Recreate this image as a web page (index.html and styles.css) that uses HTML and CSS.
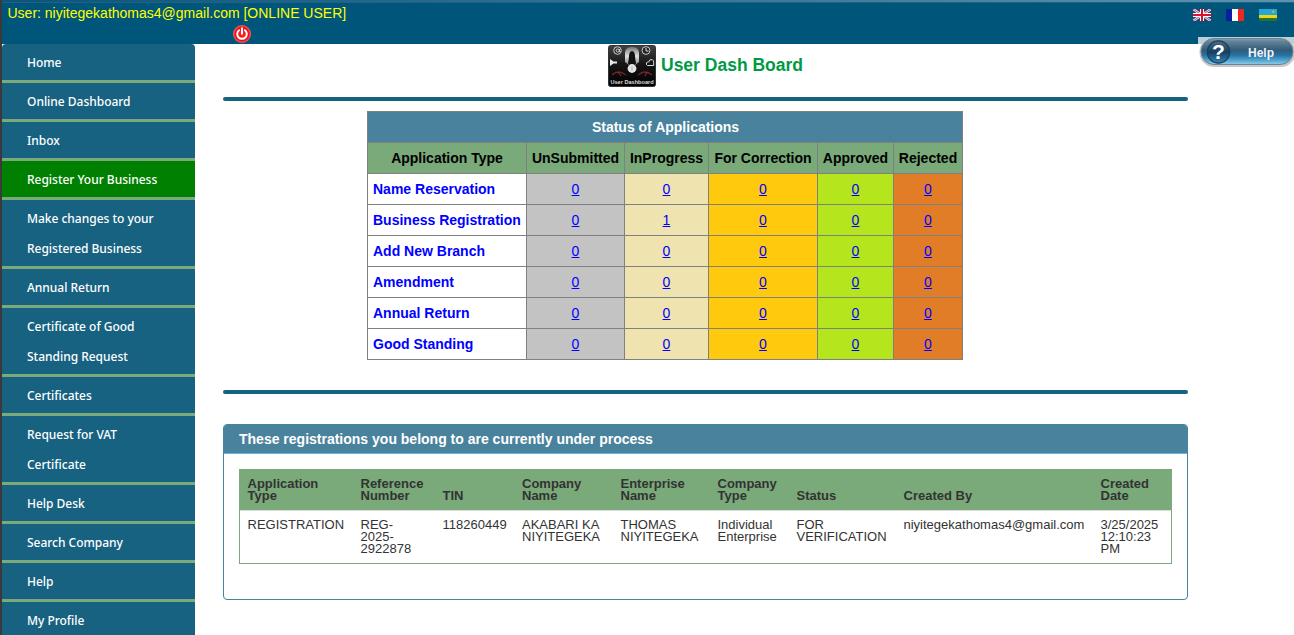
FILE: index.html
```html
<!DOCTYPE html>
<html lang="en">
<head>
<meta charset="utf-8">
<title>User Dash Board</title>
<link rel="stylesheet" href="styles.css">
</head>
<body>
<div class="page">
  <header class="topbar">
    <div class="account">
      <div class="user">User: niyitegekathomas4@gmail.com [ONLINE USER]</div>
      <svg class="power" width="18" height="18" viewBox="0 0 18 18"><defs><radialGradient id="pw"><stop offset="0" stop-color="#f22"/><stop offset=".75" stop-color="#e8161b"/><stop offset="1" stop-color="#f66"/></radialGradient></defs><circle cx="9" cy="9" r="9" fill="url(#pw)"/><path d="M6.1 5.2A4.8 4.8 0 1 0 11.900 5.200" fill="none" stroke="#fff" stroke-width="1.900" stroke-linecap="round"/><path d="M9 3.300V8.800" stroke="#fff" stroke-width="2" stroke-linecap="round"/></svg>
    </div>
    <div class="flags">
      <svg width="18" height="12" viewBox="0 0 18 12"><path fill="#28407e" d="M0 0h18v12H0z"/><path d="M0 0l18 12M18 0L0 12" stroke="#f3e9ee" stroke-width="2.400"/><path d="M0 0l18 12M18 0L0 12" stroke="#d44a5b" stroke-width="1"/><path d="M9 0v12M0 6h18" stroke="#fff" stroke-width="4"/><path d="M9 0v12M0 6h18" stroke="#d8142c" stroke-width="2"/></svg>
      <svg width="18" height="12" viewBox="0 0 18 12"><path fill="#0b1f9e" d="M0 0h6v12H0z"/><path fill="#fff" d="M6 0h6v12H6z"/><path fill="#f0271c" d="M12 0h6v12h-6z"/></svg>
      <svg width="18" height="12" viewBox="0 0 18 12"><path fill="#23a6dc" d="M0 0h18v6H0z"/><path fill="#f4d40c" d="M0 6h18v3H0z"/><path fill="#257236" d="M0 9h18v3H0z"/><circle cx="14.300" cy="2.800" r="1.300" fill="#c4b84a"/></svg>
    </div>
    <a class="help-button">
      <svg width="96" height="31" viewBox="0 0 96 31">
        <defs>
          <linearGradient id="hb" x2="0" y2="1"><stop offset="0" stop-color="#8ba3b1"/><stop offset=".1" stop-color="#64859a"/><stop offset=".45" stop-color="#305b78"/><stop offset=".65" stop-color="#2673a4"/><stop offset=".9" stop-color="#63b5dd"/><stop offset="1" stop-color="#9ecce0"/></linearGradient>
          <linearGradient id="hc" x2="0" y2="1"><stop offset="0" stop-color="#4a6f87"/><stop offset=".5" stop-color="#153e61"/><stop offset="1" stop-color="#3488b8"/></linearGradient>
        </defs>
        <path fill="#b9cfd9" d="M0 0h96v7H0z"/><path fill="#fff" d="M0 7h96v24H0z"/>
        <rect x="1.500" y=".5" width="96" height="29.500" rx="14.500" fill="#c2c9cc"/>
        <rect x="3" y="1.500" width="92" height="26" rx="13" fill="url(#hb)" stroke="#6f828d"/>
        <circle cx="20.500" cy="15" r="11.200" fill="url(#hc)" stroke="#173f5c" stroke-width="1.200"/>
      </svg>
      <span class="help-mark">?</span><span class="help-label">Help</span>
    </a>
  </header>

  <div class="body">
    <nav class="menu">
      <a>Home</a>
      <a>Online Dashboard</a>
      <a>Inbox</a>
      <a class="active">Register Your Business</a>
      <a>Make changes to your<br>Registered Business</a>
      <a>Annual Return</a>
      <a>Certificate of Good<br>Standing Request</a>
      <a>Certificates</a>
      <a>Request for VAT<br>Certificate</a>
      <a>Help Desk</a>
      <a>Search Company</a>
      <a>Help</a>
      <a>My Profile</a>
    </nav>

    <main class="content">
      <div class="heading">
        <div class="dash-icon">
          <svg width="48" height="42" viewBox="0 0 48 42">
            <defs><linearGradient id="dk" x2="0" y2="1"><stop offset="0" stop-color="#434343"/><stop offset=".45" stop-color="#161616"/><stop offset="1" stop-color="#000"/></linearGradient><linearGradient id="arch" x2="0" y2="1"><stop offset="0" stop-color="#777"/><stop offset=".5" stop-color="#ddd"/><stop offset="1" stop-color="#888"/></linearGradient></defs>
            <rect x=".5" y=".5" width="47" height="41" rx="2" fill="url(#dk)" stroke="#333"/>
            <path d="M17 17V7Q18 2 24 2T31 7V17L27 20V10Q24 7 21 10V20Z" fill="url(#arch)"/>
            <path d="M21.500 8Q24 4 26.500 8L28 19H20Z" fill="#111"/>
            <circle cx="24" cy="23.500" r="4.400" fill="#e4e4e4"/><path d="M24 21.500v4" stroke="#aaa"/>
            <path d="M13.400 6.500Q12.500 9.300 9.500 9.300A3.800 3.800 0 1 1 13.300 5.500Q13 7.500 11.500 6.800V4" fill="none" stroke="#ccc"/><circle cx="9.700" cy="5.500" r="1.500" fill="none" stroke="#ccc"/>
            <circle cx="38" cy="5.500" r="3.900" fill="#222" stroke="#ccc"/><path d="M38 3v3h2.500" fill="none" stroke="#ddd"/>
            <path d="M2 14l3.500 2.500H9v2H5.500L2 21z" fill="#e8e8e8"/>
            <path d="M39.500 20.500q-1.500-.5-1-2.500.8-1.500 2.200-1.100.8-3.200 3.600-2.200 1.600.8 1.400 3v2.800z" fill="none" stroke="#ddd"/>
            <path d="M4 30q6-6 14 0M30 30q7-6 14 0" fill="none" stroke="#6c2523" stroke-width="1.300"/><path d="M10 27l3 4M39 27l-2 4" stroke="#b23" stroke-width="1"/>
          </svg>
          <span>User Dashboard</span>
        </div>
        <h1>User Dash Board</h1>
      </div>
      <div class="rule"></div>

      <table class="status">
        <colgroup><col class="c1"><col class="c2"><col class="c3"><col class="c4"><col class="c5"><col class="c6"></colgroup>
        <tr class="caption"><th colspan="6">Status of Applications</th></tr>
        <tr class="labels"><th>Application Type</th><th>UnSubmitted</th><th>InProgress</th><th>For Correction</th><th>Approved</th><th>Rejected</th></tr>
        <tr><th>Name Reservation</th><td><a>0</a></td><td><a>0</a></td><td><a>0</a></td><td><a>0</a></td><td><a>0</a></td></tr>
        <tr><th>Business Registration</th><td><a>0</a></td><td><a>1</a></td><td><a>0</a></td><td><a>0</a></td><td><a>0</a></td></tr>
        <tr><th>Add New Branch</th><td><a>0</a></td><td><a>0</a></td><td><a>0</a></td><td><a>0</a></td><td><a>0</a></td></tr>
        <tr><th>Amendment</th><td><a>0</a></td><td><a>0</a></td><td><a>0</a></td><td><a>0</a></td><td><a>0</a></td></tr>
        <tr><th>Annual Return</th><td><a>0</a></td><td><a>0</a></td><td><a>0</a></td><td><a>0</a></td><td><a>0</a></td></tr>
        <tr><th>Good Standing</th><td><a>0</a></td><td><a>0</a></td><td><a>0</a></td><td><a>0</a></td><td><a>0</a></td></tr>
      </table>
      <div class="rule"></div>

      <section class="panel">
        <h2>These registrations you belong to are currently under process</h2>
        <div class="records">
          <div class="row head"><span>Application<br>Type</span><span>Reference<br>Number</span><span>TIN</span><span>Company<br>Name</span><span>Enterprise<br>Name</span><span>Company<br>Type</span><span>Status</span><span>Created By</span><span>Created<br>Date</span></div>
          <div class="row"><span>REGISTRATION</span><span>REG-<br>2025-<br>2922878</span><span>118260449</span><span>AKABARI KA<br>NIYITEGEKA</span><span>THOMAS<br>NIYITEGEKA</span><span>Individual<br>Enterprise</span><span>FOR<br>VERIFICATION</span><span>niyitegekathomas4@gmail.com</span><span>3/25/2025<br>12:10:23<br>PM</span></div>
        </div>
      </section>
    </main>
  </div>
</div>
</body>
</html>
```
FILE: styles.css
```css
* { box-sizing: border-box; }
body { margin: 0; height: 635px; overflow: hidden; background: #fff; font-family: "Liberation Sans", Arial, sans-serif; }
.page { height: 635px; border-left: 2px solid #3a3a3a; overflow: hidden; }

.topbar { position: relative; display: flex; justify-content: space-between; height: 44px; background: linear-gradient(90deg, #0d5478, #5e93ad) 0 0 / 100% 2px no-repeat, linear-gradient(#1b6388, #1b6388) 0 2px / 100% 1px no-repeat, #00557b; }
.account { display: flex; flex-direction: column; width: 345px; padding: 5px 0 0 5.5px; }
.user { height: 20px; line-height: 17px; font-size: 14px; color: #ff0; white-space: nowrap; }
.power { display: block; margin-left: 225.5px; }
.flags { display: flex; gap: 15px; padding: 9px 17px 0 0; }
.flags svg { display: block; }
.help-button { position: absolute; left: 1196px; top: 37px; width: 96px; height: 31px; overflow: hidden; color: #fff; font-weight: bold; }
.help-mark { position: absolute; left: 14px; top: 3px; font-size: 21px; line-height: 24px; }
.help-label { position: absolute; left: 50px; top: 8px; font-size: 12px; line-height: 16px; color: #f0f4f6; }

.body { display: flex; }
.menu { width: 193px; flex: none; border-radius: 4px 4px 0 0; overflow: hidden; background: #176281; }
.menu a { display: block; padding: 4px 0 2px 25px; border-bottom: 3px solid #7aa97a; line-height: 30px; font-family: "Noto Sans", sans-serif; font-size: 12px; font-weight: 500; letter-spacing: -.02px; color: #fff; white-space: nowrap; }
.menu .active { background: #008000; }

.content { width: 965px; margin-left: 28px; }
.heading { display: flex; justify-content: center; gap: 5px; height: 53px; padding-top: 1px; }
.dash-icon { position: relative; width: 48px; height: 42px; }
.dash-icon svg { display: block; }
.dash-icon span { position: absolute; left: 0; right: 0; bottom: 1px; text-align: center; font-size: 5.6px; line-height: 7px; font-weight: bold; color: #ddd; white-space: nowrap; }
h1 { margin: 9px 0 0; font-size: 17.5px; line-height: 22px; color: #009a44; }
.rule { height: 4px; border-radius: 2px; background: #176281; }

.status { width: 596px; margin: 10px auto 30px 144px; border-collapse: collapse; table-layout: fixed; font-size: 14px; }
.c1 { width: 159px; } .c2 { width: 98px; background: #c3c3c3; } .c3 { width: 84px; background: #efe3b0; } .c4 { width: 109px; background: #ffc90e; } .c5 { width: 76px; background: #b5e61d; } .c6 { width: 69px; background: #e17d26; }
.status tr { height: 31px; }
.status th, .status td { padding: 0; border: 1px solid #808080; text-align: center; line-height: 16px; white-space: nowrap; }
.status tr > th:first-child:not([colspan]) { color: #00f; text-align: left; padding-left: 5px; }
.status .caption th { padding-left: 1px; background: #49829c; color: #fff; }
.status .labels th, .status .labels th:first-child:not([colspan]) { background: #7aa97a; color: #000; text-align: center; padding-left: 0; }
.status a { color: #00f; text-decoration: underline; }

.panel { height: 176px; margin-top: 30px; border: 1px solid #49829c; border-radius: 4px; overflow: hidden; }
h2 { margin: 0; height: 29px; padding-left: 15px; border-bottom: 1px solid #72afe0; background: #49829c; color: #fff; font-size: 14px; line-height: 28px; }
.records { height: 95px; margin: 15px; border: 1px solid #7aa97a; font-size: 13px; line-height: 12px; color: #333; }
.row { display: grid; grid-template-columns: 113px 82px 79.500px 98.500px 97px 79px 107px 197px 1fr; padding: 8px 0 0 7.5px; white-space: nowrap; }
.head { height: 41px; align-items: end; padding-bottom: 9px; border-bottom: 1px solid #ddd; background: #7aa97a; font-weight: bold; }
```
